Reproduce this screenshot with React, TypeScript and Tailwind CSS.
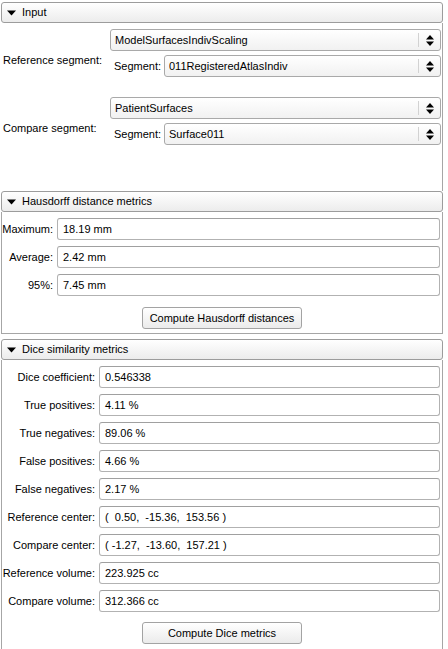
import React from "react";

function Caret() {
  return (
    <svg width="9" height="6" viewBox="0 0 9 6" className="shrink-0">
      <path d="M0 0.5h9L4.5 5.5z" fill="#000" />
    </svg>
  );
}

function SpinArrows() {
  return (
    <svg width="8" height="11" viewBox="0 0 8 11">
      <path d="M4 0L8 4.5H0z" fill="#000" />
      <path d="M0 6.5h8L4 11z" fill="#000" />
    </svg>
  );
}

function Header({ title }: { title: string }) {
  return (
    <div className="flex h-[21px] w-[442px] items-center rounded-[3px] border border-[#9c9c9c] bg-gradient-to-b from-white to-[#ececec] pl-[5px]">
      <Caret />
      <span className="ml-[6px]">{title}</span>
    </div>
  );
}

function Combo({ value }: { value: string }) {
  return (
    <div className="flex h-[22px] w-full shrink-0 items-center rounded-[3px] border border-[#a9a9a9] bg-gradient-to-b from-white to-[#f1f1f1] pl-[4px]">
      <span className="flex-1 truncate">{value}</span>
      <div className="h-[14px] w-px bg-[#d2d2d2]" />
      <div className="flex w-[21px] items-center justify-center">
        <SpinArrows />
      </div>
    </div>
  );
}

function Field({ value }: { value: string }) {
  return (
    <div className="flex h-[22px] w-full items-center rounded-[3px] border border-[#b2b2b2] border-t-[#a0a0a0] bg-white pl-[5px]">
      <span className="whitespace-pre">{value}</span>
    </div>
  );
}

function Button({ label }: { label: string }) {
  return (
    <div className="flex h-[22px] w-[160px] items-center justify-center rounded-[3px] border border-[#a3a3a3] bg-gradient-to-b from-white to-[#ebebeb]">
      {label}
    </div>
  );
}

function SegmentGroup({ label, node, segment }: { label: string; node: string; segment: string }) {
  return (
    <div className="flex">
      <div className="w-[109px] pl-[2px] pt-[25px]">{label}</div>
      <div className="flex w-[331px] flex-col gap-[4px]">
        <Combo value={node} />
        <div className="flex items-center">
          <span className="w-[54px] shrink-0 pl-[4px]">Segment:</span>
          <div className="min-w-0 flex-1">
            <Combo value={segment} />
          </div>
        </div>
      </div>
    </div>
  );
}

function MetricRow({ label, value, labelWidth }: { label: string; value: string; labelWidth: string }) {
  return (
    <div className="flex items-center pr-[2px]">
      <span className={"shrink-0 text-right " + labelWidth}>{label}</span>
      <div className="ml-[4px] min-w-0 flex-1">
        <Field value={value} />
      </div>
    </div>
  );
}

export default function App() {
  const hausdorff = [
    { label: "Maximum:", value: "18.19 mm" },
    { label: "Average:", value: "2.42 mm" },
    { label: "95%:", value: "7.45 mm" },
  ];

  const dice = [
    { label: "Dice coefficient:", value: "0.546338" },
    { label: "True positives:", value: "4.11 %" },
    { label: "True negatives:", value: "89.06 %" },
    { label: "False positives:", value: "4.66 %" },
    { label: "False negatives:", value: "2.17 %" },
    { label: "Reference center:", value: "(  0.50,  -15.36,  153.56 )" },
    { label: "Compare center:", value: "( -1.27,  -13.60,  157.21 )" },
    { label: "Reference volume:", value: "223.925 cc" },
    { label: "Compare volume:", value: "312.366 cc" },
  ];

  return (
    <div className="h-[649px] w-[448px] overflow-hidden bg-white pl-[1px] pt-[2px] font-['Liberation_Sans',Arial,sans-serif] text-[11px] leading-[13px] text-black">
      <Header title="Input" />
      <div className="flex h-[168px] w-[442px] flex-col gap-[20px] border-r border-[#a6a6a6] pt-[6px]">
        <SegmentGroup label="Reference segment:" node="ModelSurfacesIndivScaling" segment="011RegisteredAtlasIndiv" />
        <SegmentGroup label="Compare segment:" node="PatientSurfaces" segment="Surface011" />
      </div>

      <Header title="Hausdorff distance metrics" />
      <div className="flex w-[442px] flex-col border-x border-b border-[#a6a6a6] pb-[4px] pt-[6px]">
        <div className="flex flex-col gap-[6px]">
          {hausdorff.map((row) => (
            <MetricRow key={row.label} label={row.label} value={row.value} labelWidth="w-[51px]" />
          ))}
        </div>
        <div className="mt-[11px] flex justify-center">
          <Button label="Compute Hausdorff distances" />
        </div>
      </div>

      <div className="mt-[5px]">
        <Header title="Dice similarity metrics" />
      </div>
      <div className="flex h-[300px] w-[442px] flex-col border-x border-[#a6a6a6] pt-[6px]">
        <div className="flex flex-col gap-[6px]">
          {dice.map((row) => (
            <MetricRow key={row.label} label={row.label} value={row.value} labelWidth="w-[93px]" />
          ))}
        </div>
        <div className="mt-[10px] flex justify-center">
          <Button label="Compute Dice metrics" />
        </div>
      </div>
    </div>
  );
}
